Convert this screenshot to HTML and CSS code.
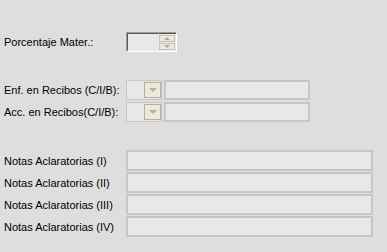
FILE: index.html
```html
<!DOCTYPE html>
<html lang="es">
<head>
    <meta charset="UTF-8">
    <title>Datos</title>
    <link rel="stylesheet" href="styles.css">
</head>
<body>
    <div class="form">
        <div class="group group-first">
            <div class="row">
                <label class="label">Porcentaje Mater.:</label>
                <div class="spinner">
                    <div class="spin-value"></div>
                    <div class="spin-buttons">
                        <span class="spin-btn"><span class="arrow-up"></span></span>
                        <span class="spin-btn"><span class="arrow-down"></span></span>
                    </div>
                </div>
            </div>
        </div>

        <div class="group group-combos">
            <div class="row">
                <label class="label">Enf. en Recibos (C/I/B):</label>
                <div class="combo"><span class="combo-btn"><span class="arrow-down"></span></span></div>
                <div class="field field-mid"></div>
            </div>
            <div class="row">
                <label class="label">Acc. en Recibos(C/I/B):</label>
                <div class="combo"><span class="combo-btn"><span class="arrow-down"></span></span></div>
                <div class="field field-mid"></div>
            </div>
        </div>

        <div class="group group-notes">
            <div class="row row-note">
                <label class="label">Notas Aclaratorias (I)</label>
                <div class="field field-wide"></div>
            </div>
            <div class="row row-note">
                <label class="label">Notas Aclaratorias (II)</label>
                <div class="field field-wide"></div>
            </div>
            <div class="row row-note">
                <label class="label">Notas Aclaratorias (III)</label>
                <div class="field field-wide"></div>
            </div>
            <div class="row row-note">
                <label class="label">Notas Aclaratorias (IV)</label>
                <div class="field field-wide"></div>
            </div>
        </div>
    </div>
</body>
</html>
```

FILE: styles.css
```css
body {
    margin: 0;
    background: #dedede;
    font-family: 'Liberation Sans', Arial, sans-serif;
    font-size: 11px;
    color: #000000;
    height: 252px;
    overflow: hidden;
}

.form {
    padding-left: 4px;
}

.group {
    display: flex;
    flex-direction: column;
    gap: 2px;
}

.group-first {
    padding-top: 32px;
}

.group-combos {
    padding-top: 28px;
}

.group-notes {
    padding-top: 28px;
    gap: 1px;
}

.row {
    display: flex;
    align-items: center;
    height: 20px;
}

.row-note {
    height: 21px;
}

.label {
    width: 122px;
    flex-shrink: 0;
    white-space: nowrap;
}

.spinner {
    display: flex;
    width: 51px;
    height: 20px;
    box-sizing: border-box;
    border-top: 1px solid #9d9d9d;
    border-left: 1px solid #9d9d9d;
    border-right: 1px solid #ffffff;
    border-bottom: 1px solid #ffffff;
    background: #e8e8e8;
}

.spin-value {
    flex: 1;
    border-top: 1px solid #555555;
    border-left: 1px solid #555555;
    border-right: 1px solid #e8e8e8;
    border-bottom: 1px solid #e8e8e8;
}

.spin-buttons {
    display: flex;
    flex-direction: column;
    gap: 1px;
    width: 16px;
    padding: 1px 1px 1px 0;
    border-top: 1px solid #555555;
}

.spin-btn {
    flex: 1;
    display: flex;
    align-items: center;
    justify-content: center;
    background: #ece9d8;
    border: 1px solid #c7c4b6;
}

.arrow-up {
    width: 0;
    height: 0;
    border-left: 3px solid transparent;
    border-right: 3px solid transparent;
    border-bottom: 3px solid #a8a8a8;
}

.arrow-down {
    width: 0;
    height: 0;
    border-left: 3px solid transparent;
    border-right: 3px solid transparent;
    border-top: 3px solid #a8a8a8;
}

.combo {
    display: flex;
    justify-content: flex-end;
    align-items: center;
    width: 36px;
    height: 20px;
    box-sizing: border-box;
    border: 1px solid #c6c6c6;
    background: #e8e8e8;
    padding-right: 0;
}

.combo-btn {
    display: flex;
    align-items: center;
    justify-content: center;
    width: 17px;
    height: 16px;
    box-sizing: border-box;
    background: #ece9d8;
    border: 1px solid #b4b1a3;
}

.combo-btn .arrow-down {
    border-left-width: 4px;
    border-right-width: 4px;
    border-top-width: 4px;
    border-top-color: #b0b0b0;
}

.field {
    height: 20px;
    box-sizing: border-box;
    border: 2px solid #c6c6c6;
    background: #e8e8e8;
}

.field-mid {
    width: 146px;
    margin-left: 2px;
}

.field-wide {
    width: 247px;
    height: 21px;
}
```
